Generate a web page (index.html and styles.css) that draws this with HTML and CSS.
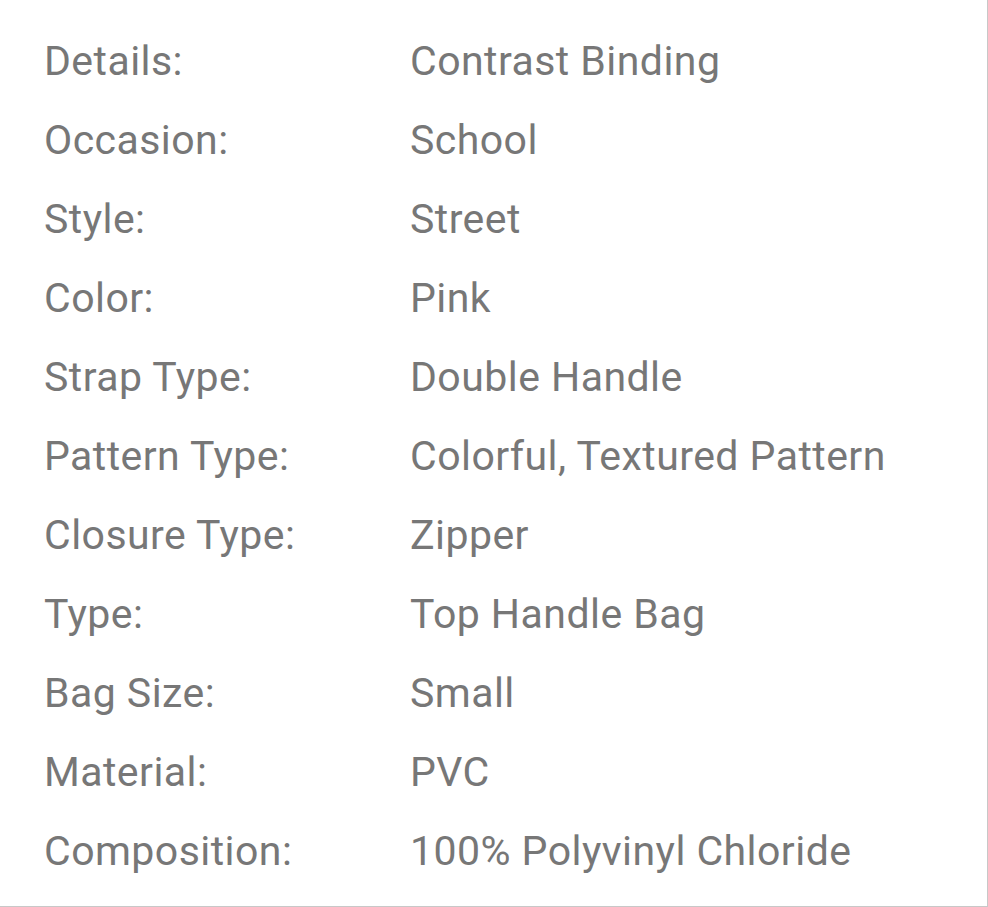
FILE: index.html
```html
<!DOCTYPE html>
<html>
<head>
<meta charset="utf-8">
<link rel="stylesheet" href="styles.css">
</head>
<body>
<div class="panel">
  <div class="row"><div class="label">Details:</div><div class="value">Contrast Binding</div></div>
  <div class="row"><div class="label">Occasion:</div><div class="value">School</div></div>
  <div class="row"><div class="label">Style:</div><div class="value">Street</div></div>
  <div class="row"><div class="label">Color:</div><div class="value">Pink</div></div>
  <div class="row"><div class="label">Strap Type:</div><div class="value">Double Handle</div></div>
  <div class="row"><div class="label">Pattern Type:</div><div class="value">Colorful, Textured Pattern</div></div>
  <div class="row"><div class="label">Closure Type:</div><div class="value">Zipper</div></div>
  <div class="row"><div class="label">Type:</div><div class="value">Top Handle Bag</div></div>
  <div class="row"><div class="label">Bag Size:</div><div class="value">Small</div></div>
  <div class="row"><div class="label">Material:</div><div class="value">PVC</div></div>
  <div class="row"><div class="label">Composition:</div><div class="value">100% Polyvinyl Chloride</div></div>
</div>
</body>
</html>
```
FILE: styles.css
```css
html, body {
  margin: 0;
  padding: 0;
  background: #fff;
}
.panel {
  box-sizing: border-box;
  width: 988px;
  height: 907px;
  padding: 21.5px 0 0 44px;
  border-right: 1px solid #c8c8c8;
  border-bottom: 1px solid #c8c8c8;
  font-family: Roboto, "Liberation Sans", sans-serif;
  font-size: 41px;
  letter-spacing: 0.45px;
  color: #777;
}
.row {
  display: flex;
  height: 79.1px;
  line-height: 79.1px;
}
.label {
  width: 366px;
  flex: none;
}
.value {
  flex: 1;
}
```
